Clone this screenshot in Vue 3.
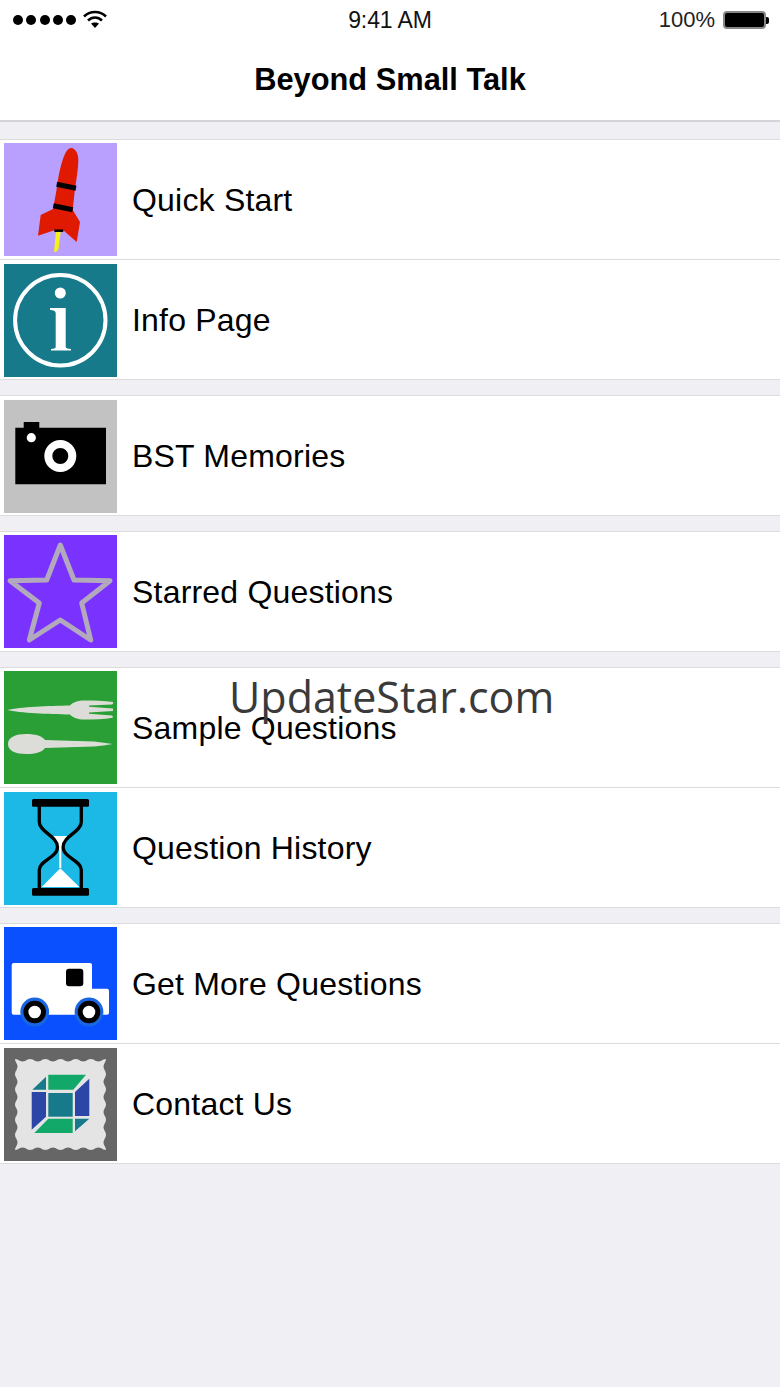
<template>
  <div class="screen">
    <div class="status-bar">
      <div class="status-left">
        <span v-for="n in 5" :key="n" class="signal-dot"></span>
        <svg class="wifi" width="24" height="18" viewBox="0 0 24 18">
          <path d="M1 6.5 C7 .5 17 .5 23 6.5" fill="none" stroke="#000" stroke-width="2.5" />
          <path d="M5 10.5 C9 6.5 15 6.5 19 10.5" fill="none" stroke="#000" stroke-width="2.5" />
          <path d="M8 13.5 C10 12 14 12 16 13.5 L12 18 Z" fill="#000" />
        </svg>
      </div>
      <span class="status-time">9:41 AM</span>
      <div class="status-right">
        <span class="battery-text">100%</span>
        <div class="battery"></div>
        <div class="battery-tip"></div>
      </div>
    </div>
    <div class="nav-bar">Beyond Small Talk</div>

    <div class="menu">
      <div v-for="(group, i) in groups" :key="i" class="menu-group">
        <div v-for="item in group" :key="item.label" class="menu-row">
          <div class="row-icon" :class="item.icon">
            <svg v-if="item.icon === 'rocket'" viewBox="0 0 113 113">
              <path d="M52 88.7 L56.7 88.7 L54.5 106 Q53 110 50 108.5 Z" fill="#f4f01a" />
              <path d="M68.7 5.3 C72 7 74.3 11 74.3 17 C74.3 27 71.5 42 70.5 50 L68.7 67 L76 79 L72.7 99 L59 87 L51 87 L34 92.7 L36.7 72 L49 66 L52 50 L54.3 35 C56 25 59 14 62 9 C64 6 66 4.5 68.7 5.3 Z" fill="#e01a00" />
              <path d="M52.7 41.3 L72 45.3 M49.3 62.7 L68.7 66.7" stroke="#000" stroke-width="5" />
              <path d="M50.3 87.7 L59.3 87.7" stroke="#000" stroke-width="2.5" />
            </svg>
            <svg v-else-if="item.icon === 'info'" viewBox="0 0 113 113">
              <circle cx="56.3" cy="56.3" r="45.2" fill="none" stroke="#fff" stroke-width="4" />
              <circle cx="56.3" cy="29" r="5.5" fill="#fff" />
              <path d="M46 44 L61.7 44 L61.7 83 C61.7 84.4 64 84.8 67 85 L67 86.5 L47 86.5 L47 85 C50 84.8 51.7 84.4 51.7 83 L51.7 49 C51.7 47 49.5 46 46 46 Z" fill="#fff" />
            </svg>
            <svg v-else-if="item.icon === 'camera'" viewBox="0 0 113 113">
              <path d="M19.7 22 H35.3 V27.7 H102 V84.3 H11.3 V27.7 H19.7 Z" fill="#000" />
              <circle cx="27.3" cy="37.7" r="4.6" fill="#fff" />
              <circle cx="56.3" cy="56" r="12" fill="none" stroke="#fff" stroke-width="8" />
            </svg>
            <svg v-else-if="item.icon === 'star'" viewBox="0 0 113 113">
              <path d="M56.3 10 L70 45 L106 45.7 L77.7 68 L86.7 105 L56.3 85 L25.3 105 L35.3 68 L6 45.7 L42.7 45 Z" fill="none" stroke="#b3a9bd" stroke-width="5" stroke-linejoin="round" />
            </svg>
            <svg v-else-if="item.icon === 'cutlery'" viewBox="0 0 113 113">
              <path d="M3.3 39 C16 36 45 34.8 66 34.5 C69 31 74 29.5 80 29.5 C90 29.5 100 29.5 109 31 C109.5 32 109 33 108 33.4 L85 34.6 L85 35.8 L109 37.6 L109 40 L85 41.6 L85 42.8 L108 44.4 C109 45 109 46 108.5 46.8 C100 48.3 90 48.5 80 48.5 C74 48.5 69 47 66 43.5 C45 43.2 16 42 3.3 39 Z" fill="#dcdcd8" />
              <path d="M4 73 C4 66 12 63 22 63 C32 63 38 65 41 69 L90 70.5 Q100 71.5 108.7 73 Q100 74.5 90 75.5 L41 77 C38 81 32 83 22 83 C12 83 4 80 4 73 Z" fill="#dcdcd8" />
            </svg>
            <svg v-else-if="item.icon === 'hourglass'" viewBox="0 0 113 113">
              <path d="M49 44 H63.5 L57.3 58 L57.3 76 L55.3 76 L55.3 58 Z" fill="#fff" />
              <path d="M56.3 76.3 L75.3 95 H37.7 Z" fill="#fff" />
              <path d="M35.3 14 V30 C35.3 40 53.5 44 53.5 55 C53.5 66 35.3 68 35.3 78 V97 M77.3 14 V30 C77.3 40 59.1 44 59.1 55 C59.1 66 77.3 68 77.3 78 V97" fill="none" stroke="#000" stroke-width="3.3" />
              <rect x="28" y="7" width="57" height="7.7" rx="1.5" fill="#000" />
              <rect x="28" y="96" width="57" height="7.7" rx="1.5" fill="#000" />
            </svg>
            <svg v-else-if="item.icon === 'truck'" viewBox="0 0 113 113">
              <path d="M9.7 36 H86 Q88 36 88 38 V61.7 H103 Q105 61.7 105 63.7 V85.7 Q105 87.7 103 87.7 H9.7 Q7.7 87.7 7.7 85.7 V38 Q7.7 36 9.7 36 Z" fill="#fff" />
              <rect x="62" y="41.7" width="17.3" height="17.6" rx="3" fill="#000" />
              <circle cx="30.7" cy="85" r="14.4" fill="#1a66e0" />
              <circle cx="85" cy="85" r="14.4" fill="#1a66e0" />
              <circle cx="30.7" cy="85" r="8.8" fill="#fff" stroke="#000" stroke-width="5" />
              <circle cx="85" cy="85" r="8.8" fill="#fff" stroke="#000" stroke-width="5" />
            </svg>
            <svg v-else viewBox="0 0 113 113">
              <path :d="stampPath" fill="#e4e4e4" />
              <path d="M44.3 45 H68.7 V68.7 H44.3 Z" fill="#167a8a" />
              <path d="M44.3 26.7 H82 L69.3 41.7 H44.3 Z M44.3 70.7 H68.7 V85 H30.3 Z" fill="#12a86a" />
              <path d="M42 28.7 V41.7 H28.3 Z M71 70.7 H85.3 L71 83.3 Z" fill="#167a8a" />
              <path d="M27.7 44 H42 V68.7 L27.7 81.7 Z M71 44 L85.3 30.7 V68 H71 Z" fill="#2c46a8" />
            </svg>
          </div>
          <span class="row-label">{{ item.label }}</span>
        </div>
      </div>
    </div>

    <div class="watermark">UpdateStar.com</div>
  </div>
</template>

<script setup>
const groups = [
  [
    { label: 'Quick Start', icon: 'rocket' },
    { label: 'Info Page', icon: 'info' }
  ],
  [{ label: 'BST Memories', icon: 'camera' }],
  [{ label: 'Starred Questions', icon: 'star' }],
  [
    { label: 'Sample Questions', icon: 'cutlery' },
    { label: 'Question History', icon: 'hourglass' }
  ],
  [
    { label: 'Get More Questions', icon: 'truck' },
    { label: 'Contact Us', icon: 'stamp' }
  ]
]

// wavy stamp edge, 6 scallops a side
function buildStamp() {
  const min = 11
  const max = 102
  const depth = 2.5
  const steps = 72
  const pts = []
  const wave = t => depth * (0.5 - 0.5 * Math.cos(t * Math.PI * 2 * 6))
  for (let i = 0; i < steps; i++) {
    const t = i / steps
    pts.push([min + (max - min) * t, min + wave(t)])
  }
  for (let i = 0; i < steps; i++) {
    const t = i / steps
    pts.push([max - wave(t), min + (max - min) * t])
  }
  for (let i = 0; i < steps; i++) {
    const t = i / steps
    pts.push([max - (max - min) * t, max - wave(t)])
  }
  for (let i = 0; i < steps; i++) {
    const t = i / steps
    pts.push([min + wave(t), max - (max - min) * t])
  }
  return 'M' + pts.map(p => p[0].toFixed(1) + ' ' + p[1].toFixed(1)).join(' L') + ' Z'
}

const stampPath = buildStamp()
</script>

<style>
html, body {
  margin: 0;
  background: #efeff4;
}
</style>

<style scoped>
.screen {
  position: relative;
  width: 780px;
  height: 1387px;
  overflow: hidden;
  background: #efeff4;
  font-family: "Liberation Sans", Arial, sans-serif;
  color: #000;
}

.status-bar {
  display: grid;
  grid-template-columns: 1fr auto 1fr;
  align-items: center;
  height: 40px;
  padding: 0 13px;
  box-sizing: border-box;
  background: #fff;
}

.status-left {
  display: flex;
  align-items: center;
  gap: 3.3px;
}

.signal-dot {
  width: 10px;
  height: 10px;
  border-radius: 50%;
  background: #000;
}

.wifi {
  margin-left: 4px;
  margin-top: -2px;
}

.status-time {
  font-size: 23px;
  letter-spacing: -0.1px;
  color: #111;
}

.status-right {
  display: flex;
  align-items: center;
  justify-content: flex-end;
  margin-right: -2px;
}

.battery-text {
  font-size: 22px;
  margin-right: 8px;
  color: #222;
}

.battery {
  width: 43px;
  height: 18px;
  box-sizing: border-box;
  border: 2px solid #888;
  border-radius: 4px;
  background: #000;
}

.battery-tip {
  width: 3px;
  height: 7px;
  background: #000;
  border-radius: 0 2px 2px 0;
}

.nav-bar {
  height: 82px;
  box-sizing: border-box;
  display: flex;
  align-items: center;
  justify-content: center;
  background: #fff;
  border-bottom: 2px solid #d4d4d8;
  font-size: 30.8px;
  font-weight: bold;
}

.menu {
  padding-top: 17px;
  display: flex;
  flex-direction: column;
  gap: 15px;
}

.menu-group {
  background: #fff;
  border-top: 1px solid #dcdce0;
}

.menu-row {
  display: flex;
  align-items: center;
  height: 120px;
  padding-left: 4px;
  box-sizing: border-box;
  border-bottom: 1px solid #dcdce0;
}

.row-icon {
  width: 113px;
  height: 113px;
  flex-shrink: 0;
}

/* second rows and the memories row sit a pixel lower */
.menu-row + .menu-row .row-icon,
.menu-group:nth-child(2) .row-icon {
  margin-top: 2px;
}

.row-icon svg {
  display: block;
  width: 113px;
  height: 113px;
}

.rocket { background: #b9a0ff; }
.info { background: #167a8a; }
.camera { background: #c2c2c2; }
.star { background: #7a33ff; }
.cutlery { background: #2a9f35; }
.hourglass { background: #1cb8e6; }
.truck { background: #0a50ff; }
.stamp { background: #666; }

.row-label {
  margin-left: 15px;
  margin-top: 2px;
  font-size: 32px;
  letter-spacing: 0.2px;
}

.watermark {
  position: absolute;
  left: 229px;
  top: 668px;
  font-family: "Open Sans", sans-serif;
  font-size: 43px;
  line-height: 58px;
  color: #3a3a3a;
}
</style>
